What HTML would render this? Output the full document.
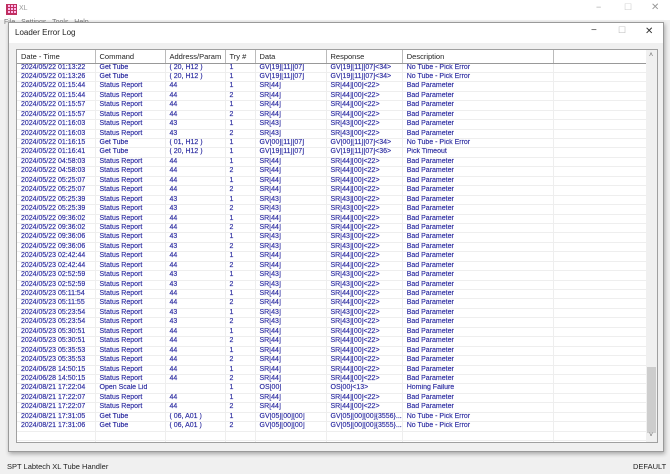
<html><head><style>
body{margin:0;width:670px;height:474px;background:#f0f0f0;font-family:"Liberation Sans",sans-serif;position:relative;overflow:hidden}
.top{position:absolute;left:0;top:0;width:670px;height:20px;background:#fff}
.dlg{position:absolute;left:8px;top:22px;width:654px;height:428px;background:#f0f0f0;border:1px solid #9a9a9a;box-shadow:1px 2px 4px rgba(0,0,0,.3)}
.dt{position:absolute;left:0;top:0;width:654px;height:20px;background:#fff}
.lv{position:absolute;left:7px;top:26px;width:640px;height:392px;background:#fff;border:1px solid #a0a0a0;overflow:hidden}
table{border-collapse:collapse;font-size:7px;color:#2b2ba0;table-layout:fixed}
td{height:9.45px;padding:0 0 0 4px;border-right:1px solid #eee;border-bottom:1px solid #eee;white-space:nowrap;overflow:hidden;line-height:8.4px;font-weight:normal;-webkit-text-stroke:0.15px #2b2ba0}
th{height:13px;text-align:left;font-weight:normal;color:#222;font-size:7.5px;padding:0 0 0 4px;border-right:1px solid #bbb;border-bottom:1px solid #999;background:#fff}
.sb{position:absolute;right:0;top:0;width:11px;height:392px;background:#f0f0f0}
.th{position:absolute;left:1px;top:317px;width:9px;height:66px;background:#cdcdcd}
.st{position:absolute;left:0;top:456px;width:670px;height:18px;font-size:7.5px;color:#222}
</style></head><body>
<div class="top"><div style="position:absolute;left:6px;top:4px;width:9px;height:9px;border:1px solid #c03060;background:repeating-linear-gradient(90deg,#c03060 0 1px,transparent 1px 3px),repeating-linear-gradient(0deg,#c03060 0 1px,#fbe 1px 3px)"></div><span style="position:absolute;left:19px;top:5px;font-size:7px;color:#999">XL</span>
<span style="position:absolute;left:596px;top:2px;color:#aaa;font-size:9px">−</span><span style="position:absolute;left:624px;top:2px;color:#ccc;font-size:9px">☐</span><span style="position:absolute;left:651px;top:2px;color:#999;font-size:10px">✕</span></div>
<div style="position:absolute;left:4px;top:19px;font-size:7px;color:#777">File &nbsp; Settings &nbsp; Tools &nbsp; Help</div>
<div class="dlg"><div class="dt"><span style="position:absolute;left:6px;top:5px;font-size:8px;color:#222">Loader Error Log</span>
<span style="position:absolute;left:582px;top:2px;color:#444;font-size:10px">−</span><span style="position:absolute;left:609px;top:2px;color:#bbb;font-size:9px">☐</span><span style="position:absolute;left:636px;top:3px;color:#333;font-size:10px">✕</span></div>
<div class="lv"><table>
<colgroup><col style="width:78px"><col style="width:70px"><col style="width:60px"><col style="width:30px"><col style="width:71px"><col style="width:76px"><col style="width:151px"><col style="width:93px"></colgroup>
<tr><th>Date - Time</th><th>Command</th><th>Address/Param</th><th>Try #</th><th>Data</th><th>Response</th><th>Description</th><th></th></tr>
<tbody id="b"></tbody></table>
<div class="sb"><div style="position:absolute;left:3px;top:2px;font-size:7px;color:#666">˄</div><div class="th"></div><div style="position:absolute;left:3px;top:382px;font-size:7px;color:#666">˅</div></div></div></div>
<div class="st"><span style="position:absolute;left:7px;top:6px">SPT Labtech XL Tube Handler</span><span style="position:absolute;left:633px;top:6px">DEFAULT</span></div>
<script>
var R=[["2024/05/22 01:13:22","Get Tube","( 20, H12 )","1","GV[19][11][07]","GV[19][11][07]<34>","No Tube - Pick Error"],
["2024/05/22 01:13:26","Get Tube","( 20, H12 )","1","GV[19][11][07]","GV[19][11][07]<34>","No Tube - Pick Error"]];
function sr(d,a,t){R.push([d,"Status Report",a,t,"SR["+a+"]","SR["+a+"][00]<22>","Bad Parameter"]);}
[["2024/05/22 01:15:44","44","1"],["2024/05/22 01:15:44","44","2"],["2024/05/22 01:15:57","44","1"],["2024/05/22 01:15:57","44","2"],["2024/05/22 01:16:03","43","1"],["2024/05/22 01:16:03","43","2"]].forEach(function(e){sr(e[0],e[1],e[2])});
R.push(["2024/05/22 01:16:15","Get Tube","( 01, H12 )","1","GV[00][11][07]","GV[00][11][07]<34>","No Tube - Pick Error"]);
R.push(["2024/05/22 01:16:41","Get Tube","( 20, H12 )","1","GV[19][11][07]","GV[19][11][07]<36>","Pick Timeout"]);
var L=[["2024/05/22 04:58:03","44","1"],["2024/05/22 04:58:03","44","2"],["2024/05/22 05:25:07","44","1"],["2024/05/22 05:25:07","44","2"],["2024/05/22 05:25:39","43","1"],["2024/05/22 05:25:39","43","2"],["2024/05/22 09:36:02","44","1"],["2024/05/22 09:36:02","44","2"],["2024/05/22 09:36:06","43","1"],["2024/05/22 09:36:06","43","2"],["2024/05/23 02:42:44","44","1"],["2024/05/23 02:42:44","44","2"],["2024/05/23 02:52:59","43","1"],["2024/05/23 02:52:59","43","2"],["2024/05/23 05:11:54","44","1"],["2024/05/23 05:11:55","44","2"],["2024/05/23 05:23:54","43","1"],["2024/05/23 05:23:54","43","2"],["2024/05/23 05:30:51","44","1"],["2024/05/23 05:30:51","44","2"],["2024/05/23 05:35:53","44","1"],["2024/05/23 05:35:53","44","2"],["2024/06/28 14:50:15","44","1"],["2024/06/28 14:50:15","44","2"]];
L.forEach(function(e){sr(e[0],e[1],e[2])});
R.push(["2024/08/21 17:22:04","Open Scale Lid","","1","OS[00]","OS[00]<13>","Homing Failure"]);
sr("2024/08/21 17:22:07","44","1");sr("2024/08/21 17:22:07","44","2");
R.push(["2024/08/21 17:31:05","Get Tube","( 06, A01 )","1","GV[05][00][00]","GV[05][00][00]{3556}...","No Tube - Pick Error"]);
R.push(["2024/08/21 17:31:06","Get Tube","( 06, A01 )","2","GV[05][00][00]","GV[05][00][00]{3555}...","No Tube - Pick Error"]);
R.push(["","","","","","",""]);R.push(["","","","","","",""]);
var h="";R.forEach(function(r){h+="<tr>";r.forEach(function(c){h+="<td>"+c.replace(/</g,"&lt;")+"</td>"});h+="<td></td></tr>"});
document.getElementById("b").innerHTML=h;
</script>
</body></html>
